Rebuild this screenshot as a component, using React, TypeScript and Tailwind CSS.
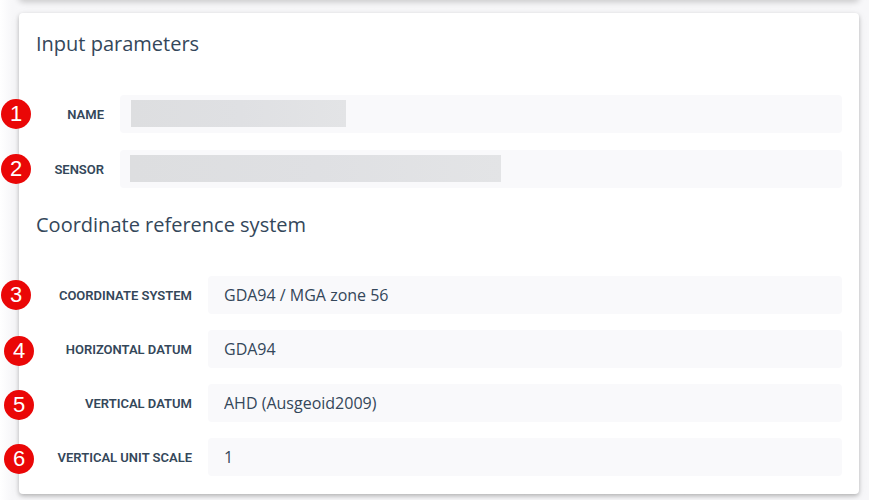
import React, { FC } from "react";
import clsx from "clsx";

type FieldProps = {
  id: string;
  step: number;
  label: string;
  value?: string;
  labelWidth: string;
  badge: string;
  mask?: string;
};

const nearBadge = "-left-[35px] top-1";
const farBadge = "-left-8 top-1.5";

const inputFields = [
  { id: "name", step: 1, label: "Name", badge: nearBadge, mask: "left-[11px] w-[215px]" },
  { id: "sensor", step: 2, label: "Sensor", badge: nearBadge, mask: "left-[10px] w-[371px]" },
];

const crsFields = [
  {
    id: "coordinate-system",
    step: 3,
    label: "Coordinate system",
    value: "GDA94 / MGA zone 56",
    badge: nearBadge,
  },
  { id: "horizontal-datum", step: 4, label: "Horizontal datum", value: "GDA94", badge: farBadge },
  {
    id: "vertical-datum",
    step: 5,
    label: "Vertical datum",
    value: "AHD (Ausgeoid2009)",
    badge: farBadge,
  },
  { id: "vertical-unit-scale", step: 6, label: "Vertical unit scale", value: "1", badge: farBadge },
];

const Field: FC<FieldProps> = ({ id, step, label, value = "", labelWidth, badge, mask }) => (
  <div className="relative flex items-center gap-4">
    <span
      className={clsx(
        "absolute flex size-[30px] items-center justify-center rounded-full bg-[#ea0707] font-['Liberation_Sans',sans-serif] text-[22px] leading-none text-white",
        badge
      )}
    >
      {step}
    </span>
    <label
      htmlFor={id}
      className={clsx(
        "shrink-0 pt-0.5 text-right font-[Roboto,sans-serif] text-[13px] leading-5 font-semibold whitespace-nowrap uppercase",
        labelWidth
      )}
    >
      {label}
    </label>
    <div className="relative min-w-0 flex-1">
      <input
        id={id}
        type="text"
        readOnly
        value={value}
        className="block h-[38px] w-full rounded bg-[#f9f9fb] px-4 text-base outline-none"
      />
      {mask && (
        <span
          className={clsx(
            "absolute top-[5px] h-[27px] bg-linear-to-r from-[#dddee0] via-[#dfe0e3] to-[#e3e4e6]",
            mask
          )}
        />
      )}
    </div>
  </div>
);

const SectionTitle: FC<{ children: React.ReactNode }> = ({ children }) => (
  <h2 className="text-xl leading-7">{children}</h2>
);

const App = () => {
  return (
    <div className="min-h-screen overflow-hidden bg-linear-to-r from-white via-[#f7f7f9] via-[12px] to-[#f7f7f9] pr-2.5 pb-1.5 pl-[19px] font-['Open_Sans',sans-serif] text-[#34475a]">
      {/* lower edge of the panel above */}
      <div className="-mt-2 h-2 rounded-b shadow-[0_2px_6px_rgba(0,0,0,0.2)]" />

      <main className="mt-[13px] rounded bg-white px-[17px] pt-[17px] pb-[18px] shadow-[0_2px_4px_rgba(0,0,0,0.25),0_2px_12px_rgba(0,0,0,0.05)]">
        <section>
          <SectionTitle>Input parameters</SectionTitle>
          <div className="mt-[37px] flex flex-col gap-[17px]">
            {inputFields.map((field) => (
              <Field key={field.id} labelWidth="w-[68px]" {...field} />
            ))}
          </div>
        </section>

        <section className="mt-[23px]">
          <SectionTitle>Coordinate reference system</SectionTitle>
          <div className="mt-[37px] flex flex-col gap-4">
            {crsFields.map((field) => (
              <Field key={field.id} labelWidth="w-[156px]" {...field} />
            ))}
          </div>
        </section>
      </main>
    </div>
  );
};

export default App;
